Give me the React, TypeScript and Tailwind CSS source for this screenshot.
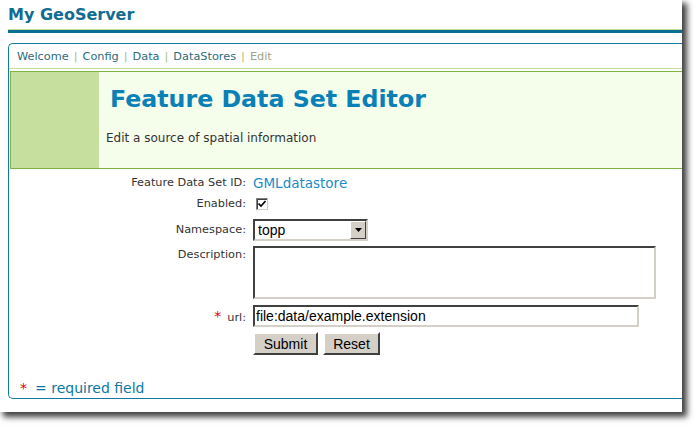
import React from 'react';

const navLinks = ['Welcome', 'Config', 'Data', 'DataStores'];

const Label: React.FC<{ children: React.ReactNode; required?: boolean; className?: string }> = ({ children, required, className }) => (
  <div className={`w-[238px] shrink-0 text-right pr-[1px] text-[11.3px] text-[#333] ${className ?? ''}`}>
    {required && <span className="text-[#e00000] text-[14px] mr-[6px]">*</span>}
    {children}
  </div>
);

const App: React.FC = () => {
  return (
    <div className="w-[695px] h-[426px] bg-white overflow-hidden">
      <div className="w-[682px] h-[412px] bg-white shadow-[4px_4px_6px_1px_rgba(0,0,0,0.75)] overflow-hidden pl-2 font-['DejaVu_Sans',sans-serif]">
        {/* top title */}
        <div className="h-[29px] pt-[5px] text-[16px] font-bold text-[#116c92] leading-[20px]">My GeoServer</div>
        <div className="h-[1px] bg-[#c6dc9a]" />
        <div className="h-[3px] bg-[#0a6d96]" />

        {/* main panel */}
        <div className="mt-[10px] h-[356px] border-l border-t border-b border-[#127aa2] rounded-tl-[5px] rounded-bl-[5px] flex flex-col">
          <nav className="h-[25px] pt-[2px] flex items-center pl-[8px] text-[11.3px] border-b border-[#c6dc9a]">
            {navLinks.map(link => (
              <React.Fragment key={link}>
                <span className="text-[#2c6b7e]">{link}</span>
                <span className="text-[#a5c27a] mx-[5px]">|</span>
              </React.Fragment>
            ))}
            <span className="text-[#a0a482]">Edit</span>
          </nav>

          <div className="mt-[2px] ml-[1px] h-[98px] flex border border-[#80b342] border-r-0">
            <div className="w-[88px] bg-[#c6df9e]" />
            <div className="flex-1 bg-[#f5fdeb] pl-[7px]">
              <h1 className="pl-[4px] pt-[12px] text-[23.7px] leading-[30px] font-bold text-[#0a80b6]">Feature Data Set Editor</h1>
              <p className="mt-[15px] text-[12px] text-[#333]">Edit a source of spatial information</p>
            </div>
          </div>

          {/* form */}
          <div className="flex flex-col">
            <div className="mt-[6px] h-[17px] flex items-center">
              <Label>Feature Data Set ID:</Label>
              <span className="ml-[6px] text-[13.5px] text-[#1c8bc6]">GMLdatastore</span>
            </div>

            <div className="mt-[5px] h-[14px] flex items-center">
              <Label>Enabled:</Label>
              <div className="ml-[9px] w-[12px] h-[12px] bg-white border border-t-[#808080] border-l-[#808080] border-b-[#d4d0c8] border-r-[#d4d0c8] shadow-[inset_1px_1px_0_#404040] flex items-center justify-center">
                <svg width="8" height="8" viewBox="0 0 8 8">
                  <path d="M0.5 3.5 L3 6 L7.5 1" fill="none" stroke="#000" strokeWidth="1.6" />
                </svg>
              </div>
            </div>

            <div className="mt-[8px] h-[22px] flex items-center">
              <Label>Namespace:</Label>
              <div className="ml-[6px] w-[115px] h-[22px] flex bg-white border-2 border-t-[#404040] border-l-[#404040] border-b-[#d4d0c8] border-r-[#d4d0c8]">
                <span className="flex-1 pl-[3px] pt-[1px] text-[14px] leading-[17px] font-['Liberation_Sans',sans-serif] text-black">topp</span>
                <div className="w-[16px] bg-[#d4d0c8] border border-t-white border-l-white border-b-[#404040] border-r-[#404040] flex items-center justify-center">
                  <svg width="7" height="4" viewBox="0 0 7 4">
                    <path d="M0 0 H7 L3.5 4 Z" fill="#000" />
                  </svg>
                </div>
              </div>
            </div>

            <div className="mt-[5px] h-[53px] flex">
              <Label className="pt-[1px]">Description:</Label>
              <div className="ml-[6px] w-[403px] h-[53px] bg-white border-2 border-t-[#404040] border-l-[#404040] border-b-[#d4d0c8] border-r-[#d4d0c8]" />
            </div>

            <div className="mt-[6px] h-[22px] flex items-center">
              <Label required>url:</Label>
              <div className="ml-[6px] w-[386px] h-[22px] bg-white border-2 border-t-[#404040] border-l-[#404040] border-b-[#d4d0c8] border-r-[#d4d0c8] pl-[1px] pt-[1px] text-[14px] leading-[17px] font-['Liberation_Sans',sans-serif] text-black">
                file:data/example.extension
              </div>
            </div>

            <div className="mt-[5px] h-[23px] flex">
              <div className="w-[238px] shrink-0" />
              <button className="ml-[6px] w-[65px] h-[23px] bg-[#d4d0c8] border-2 border-t-white border-l-white border-b-[#404040] border-r-[#404040] text-[14px] font-['Liberation_Sans',sans-serif] text-black leading-[18px]">
                Submit
              </button>
              <button className="ml-[5px] w-[57px] h-[23px] bg-[#d4d0c8] border-2 border-t-white border-l-white border-b-[#404040] border-r-[#404040] text-[14px] font-['Liberation_Sans',sans-serif] text-black leading-[18px]">
                Reset
              </button>
            </div>
          </div>

          <div className="mt-auto pb-[1px] pl-[11px] text-[14px] leading-[18px]">
            <span className="text-[#e00000]">*</span>
            <span className="text-[#0a78a2] ml-[8px]">= required field</span>
          </div>
        </div>
      </div>
    </div>
  );
};

export default App;
